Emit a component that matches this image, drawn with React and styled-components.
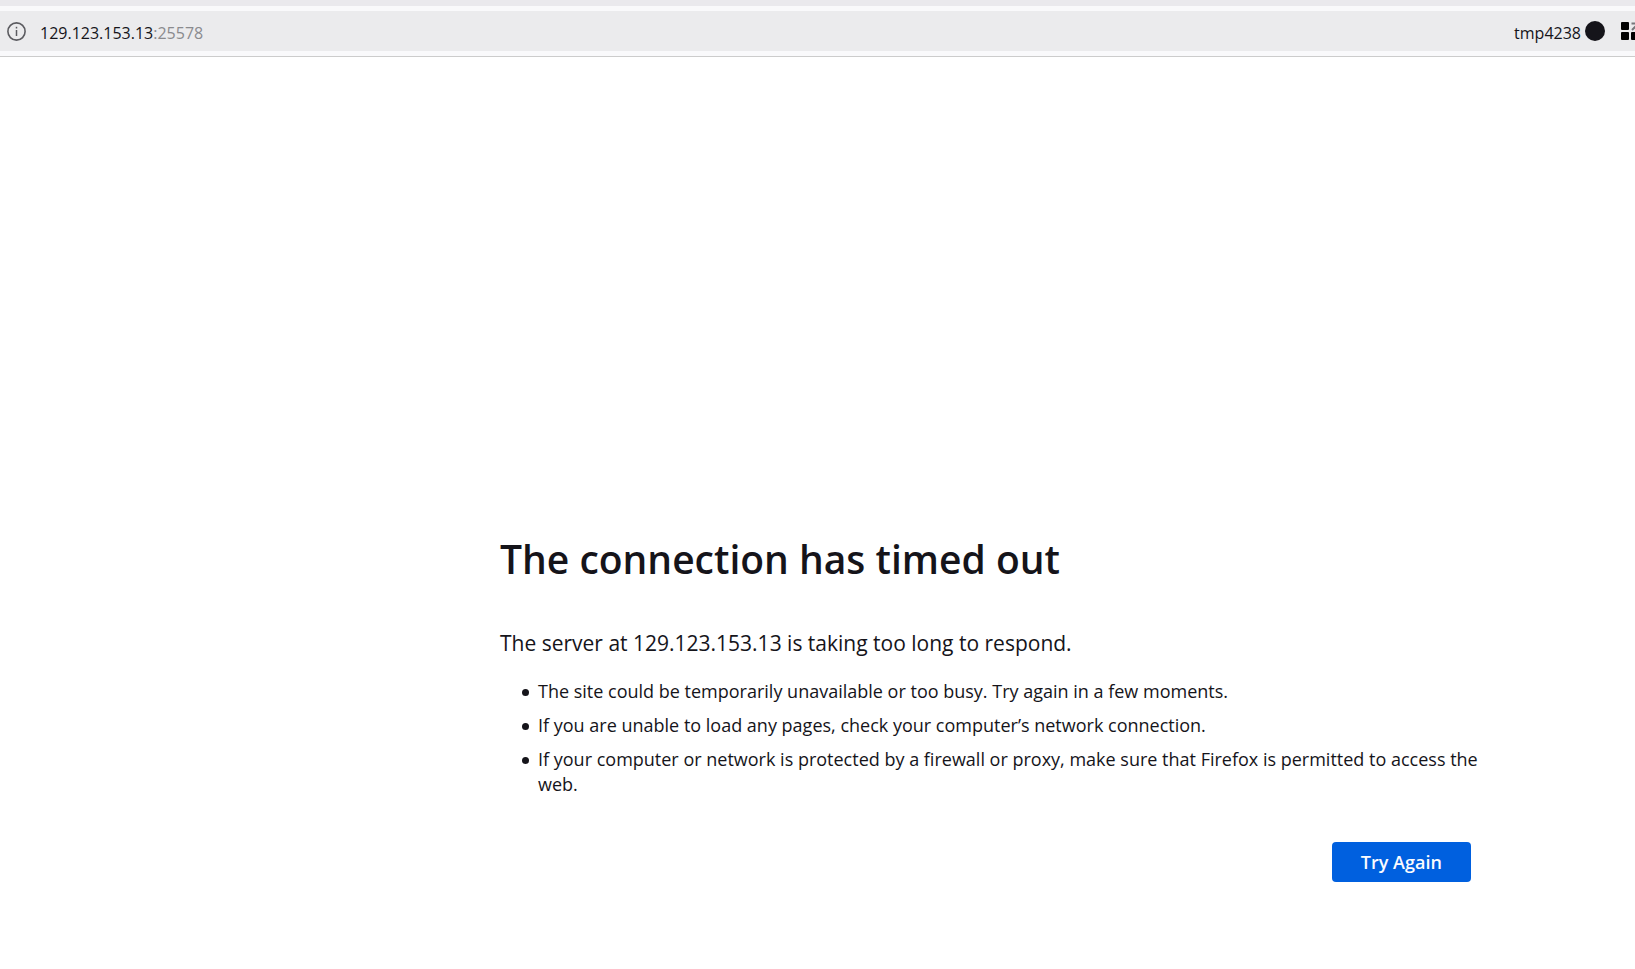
import React from 'react'
import { createGlobalStyle, styled } from 'styled-components';

const GlobalStyle = createGlobalStyle`
  body {
    margin: 0;
    background: #ffffff;
    color: #15141a;
    font-family: "Open Sans", "Noto Sans", sans-serif;
    overflow-x: hidden;
  }
`;

const TabStrip = styled.div`
  height: 6px;
  background: #eae9ed;
`;

const Toolbar = styled.header`
  padding: 5px 0;
  background: #f9f9fb;
  border-bottom: 1px solid #cccccc;
`;

const AddressBar = styled.div`
  display: flex;
  align-items: center;
  height: 40px;
  padding-left: 7px;
  background: #ebebed;
  overflow: hidden;
`;

const IconButton = styled.button`
  display: flex;
  flex-shrink: 0;
  padding: 0;
  border: none;
  background: none;
  color: ${({ $color }) => $color || "#000000"};
`;

const BarText = styled.span`
  padding-top: 4px;
  font-size: 16px;
  line-height: 24px;
`;

const Url = styled(BarText)`
  flex: 1;
  margin-left: 14px;
`;

const Port = styled.span`
  color: #8a8a8e;
`;

const ToolbarEnd = styled.div`
  display: flex;
  align-items: center;
  gap: 16px;
  margin-right: -5px;
`;

const Container = styled.div`
  display: flex;
  align-items: center;
  gap: 4px;
`;

const Page = styled.main`
  display: flex;
  flex-direction: column;
  padding: 475px 9% 87px 500px;
`;

const Title = styled.h1`
  margin: 0 0 41px;
  font-size: 39px;
  font-weight: 600;
  line-height: 54px;
`;

const Intro = styled.p`
  margin: 0 0 20px;
  font-size: 21px;
  line-height: 32px;
`;

const TipList = styled.ul`
  display: flex;
  flex-direction: column;
  gap: 9px;
  margin: 0 0 45px;
  padding-left: 22px;
  list-style: none;
  font-size: 18px;
  line-height: 25px;
`;

const Tip = styled.li`
  display: flex;
  gap: 9px;
  &::before {
    content: "";
    flex-shrink: 0;
    width: 7px;
    height: 7px;
    margin-top: 10px;
    border-radius: 50%;
    background: currentColor;
  }
`;

const RetryButton = styled.button`
  align-self: flex-end;
  width: 139px;
  height: 40px;
  margin-right: 17px;
  padding: 0;
  border: none;
  border-radius: 4px;
  background: #0060df;
  color: #fbfbfe;
  font-family: inherit;
  font-size: 18px;
  font-weight: 600;
`;

const tips = [
  "The site could be temporarily unavailable or too busy. Try again in a few moments.",
  "If you are unable to load any pages, check your computer’s network connection.",
  "If your computer or network is protected by a firewall or proxy, make sure that Firefox is permitted to access the web.",
];

const InfoIcon = () => (
  <svg width="19" height="19" viewBox="0 0 19 19" fill="none" stroke="currentColor">
    <circle cx="9.5" cy="9.5" r="8.6" strokeWidth="1.6" />
    <path d="M9.5 8v6" strokeWidth="1.5" />
    <path d="M9.5 4.8v1.7" strokeWidth="1.5" />
  </svg>
);

const DotIcon = () => (
  <svg width="20" height="20" viewBox="0 0 20 20" fill="currentColor">
    <circle cx="10" cy="10" r="10" />
  </svg>
);

const AppsIcon = () => (
  <svg width="19" height="18" viewBox="0 0 19 18">
    <rect x="0" y="0" width="8" height="8" rx="1" />
    <rect x="0" y="10" width="8" height="8" rx="1" />
    <rect x="10" y="10" width="8" height="8" rx="1" />
    <path d="M10.5 1.5h7v7M17 2l-6 6" fill="none" stroke="#77767b" strokeWidth="2" />
  </svg>
);

const App = () => {
  return (
    <>
      <GlobalStyle />
      <TabStrip />
      <Toolbar>
        <AddressBar>
          <IconButton aria-label="Site information" $color="#5b5b60">
            <InfoIcon />
          </IconButton>
          <Url>129.123.153.13<Port>:25578</Port></Url>
          <ToolbarEnd>
            <Container>
              <BarText>tmp4238</BarText>
              <DotIcon />
            </Container>
            <IconButton aria-label="Extensions">
              <AppsIcon />
            </IconButton>
          </ToolbarEnd>
        </AddressBar>
      </Toolbar>
      <Page>
        <Title>The connection has timed out</Title>
        <Intro>The server at 129.123.153.13 is taking too long to respond.</Intro>
        <TipList>
          {tips.map((tip) => (
            <Tip key={tip}>{tip}</Tip>
          ))}
        </TipList>
        <RetryButton>Try Again</RetryButton>
      </Page>
    </>
  )
};

export default App;
